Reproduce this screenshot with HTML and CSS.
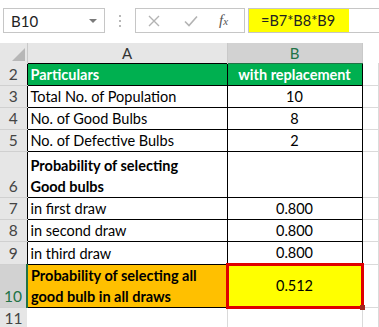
FILE: index.html
```html
<!DOCTYPE html>
<html lang="en">
<head>
    <meta charset="UTF-8">
    <meta name="viewport" content="width=device-width, initial-scale=1.0">
    <title>Probability Sheet</title>
    <link rel="stylesheet" href="styles.css">
</head>
<body>

<div class="formula-bar">
    <div class="name-box">
        <span>B10</span>
        <span class="drop"></span>
    </div>
    <div class="grip"><i></i><i></i><i></i></div>
    <div class="buttons">
        <svg class="btn-x" width="12" height="12" viewBox="0 0 12 12"><path d="M1 1L11 11M11 1L1 11" stroke="#b3b3b3" stroke-width="1.4" fill="none"/></svg>
        <svg class="btn-ok" width="14" height="12" viewBox="0 0 14 12"><path d="M1 6.5L5 10.5L13 1.5" stroke="#b3b3b3" stroke-width="1.6" fill="none"/></svg>
        <span class="fx">f<small>x</small></span>
    </div>
    <div class="formula">
        <span class="formula-text">=B7*B8*B9</span>
    </div>
</div>

<table class="sheet">
    <colgroup>
        <col class="c-head">
        <col class="c-a">
        <col class="c-b">
        <col>
    </colgroup>
    <tr class="col-heads">
        <th class="corner"><span class="tri"></span></th>
        <th>A</th>
        <th class="sel">B</th>
        <th class="plain"></th>
    </tr>
    <tr>
        <th class="rh">2</th>
        <td class="cell green">Particulars</td>
        <td class="cell green center">with replacement</td>
        <td class="blank"></td>
    </tr>
    <tr>
        <th class="rh">3</th>
        <td class="cell">Total No. of Population</td>
        <td class="cell center">10</td>
        <td class="blank"></td>
    </tr>
    <tr>
        <th class="rh">4</th>
        <td class="cell">No. of Good Bulbs</td>
        <td class="cell center">8</td>
        <td class="blank"></td>
    </tr>
    <tr>
        <th class="rh">5</th>
        <td class="cell">No. of Defective Bulbs</td>
        <td class="cell center">2</td>
        <td class="blank"></td>
    </tr>
    <tr class="tall">
        <th class="rh">6</th>
        <td class="cell bold">Probability of selecting<br>Good bulbs</td>
        <td class="cell"></td>
        <td class="blank"></td>
    </tr>
    <tr>
        <th class="rh">7</th>
        <td class="cell">in first draw</td>
        <td class="cell center">0.800</td>
        <td class="blank"></td>
    </tr>
    <tr>
        <th class="rh">8</th>
        <td class="cell">in second draw</td>
        <td class="cell center">0.800</td>
        <td class="blank"></td>
    </tr>
    <tr>
        <th class="rh">9</th>
        <td class="cell">in third draw</td>
        <td class="cell center">0.800</td>
        <td class="blank"></td>
    </tr>
    <tr class="tall short">
        <th class="rh active">10</th>
        <td class="cell bold orange">Probability of selecting all<br>good bulb in all draws</td>
        <td class="cell center yellow picked">0.512<span class="handle"></span></td>
        <td class="blank"></td>
    </tr>
    <tr>
        <th class="rh">11</th>
        <td class="blank"></td>
        <td class="blank"></td>
        <td class="blank"></td>
    </tr>
</table>

</body>
</html>
```

FILE: styles.css
```css
body {
    margin: 0;
    background: #fff;
    font-family: Lato, "Open Sans", sans-serif;
    color: #000;
    width: 379px;
    height: 327px;
    overflow: hidden;
}

/* formula bar */
.formula-bar {
    display: flex;
    align-items: center;
    height: 43px;
    padding-left: 3px;
    box-sizing: border-box;
}
.name-box {
    width: 102px;
    height: 25px;
    border: 1px solid #c6c6c6;
    box-sizing: border-box;
    display: flex;
    align-items: center;
    justify-content: space-between;
    padding: 0 7px 0 7px;
    font-size: 15px;
    color: #222;
    margin-bottom: 2px;
}
.drop {
    width: 0;
    height: 0;
    border-left: 4px solid transparent;
    border-right: 4px solid transparent;
    border-top: 4px solid #7a7a7a;
}
.grip {
    width: 30px;
    display: flex;
    flex-direction: column;
    align-items: center;
    gap: 3px;
    margin-bottom: 2px;
}
.grip i {
    width: 2px;
    height: 2px;
    background: #b8b8b8;
}
.buttons {
    width: 110px;
    height: 25px;
    border: 1px solid #c6c6c6;
    box-sizing: border-box;
    display: flex;
    align-items: center;
    padding-left: 12px;
    margin-bottom: 2px;
}
.btn-ok {
    margin-left: 24px;
}
.fx {
    margin-left: 21px;
    font-family: "Liberation Serif", serif;
    font-style: italic;
    font-size: 15px;
    color: #555;
}
.fx small {
    font-size: 11px;
}
.formula {
    flex: 1;
    height: 25px;
    margin-left: 3px;
    border: 1px solid #c6c6c6;
    border-right: none;
    box-sizing: border-box;
    margin-bottom: 2px;
}
.formula-text {
    display: block;
    width: 100px;
    height: 23px;
    background: #ffff00;
    font-size: 14.5px;
    line-height: 23px;
    padding-left: 12px;
    box-sizing: border-box;
    color: #222;
}

/* grid */
.sheet {
    border-collapse: collapse;
    table-layout: fixed;
    width: 379px;
    font-size: 14.5px;
}
.c-head { width: 27px; }
.c-a { width: 200px; }
.c-b { width: 135px; }

tr {
    height: 22px;
}
tr.col-heads {
    height: 20px;
}
tr.tall {
    height: 46px;
}
tr.tall.short {
    height: 40px;
}

.col-heads th {
    padding: 0;
    background: #e6e6e6;
    border-right: 1px solid #c9c9c9;
    font-weight: normal;
    color: #333;
    font-size: 15px;
    line-height: 18px;
}
.col-heads th.sel {
    background: #d2d2d2;
    color: #217346;
    border-bottom: 1px solid #217346;
}
.col-heads th.plain {
    background: #fff;
    border: none;
}
.corner {
    position: relative;
}
.tri {
    position: absolute;
    right: 2px;
    bottom: 2px;
    width: 0;
    height: 0;
    border-left: 13px solid transparent;
    border-bottom: 13px solid #b7b7b7;
}

.rh {
    background: #e6e6e6;
    font-weight: normal;
    color: #444;
    font-size: 15.5px;
    padding: 0;
    text-align: center;
    border-bottom: 1px solid #d0d0d0;
    vertical-align: bottom;
    line-height: 21px;
}
.rh.active {
    background: #d2d2d2;
    color: #217346;
    border-right: 2px solid #217346;
}

.cell {
    border: 1px solid #000;
    padding: 0 3px;
    vertical-align: bottom;
    white-space: nowrap;
    line-height: 21px;
}
.cell.bold {
    font-weight: bold;
}
.center {
    text-align: center;
}
.green {
    background: #00b050;
    color: #fff;
    font-weight: bold;
}
.orange {
    background: #ffc000;
}
.yellow {
    background: #ffff00;
}
.picked {
    border: 3px solid #e00000;
    position: relative;
    vertical-align: middle;
}
.handle {
    position: absolute;
    right: -4px;
    bottom: -4px;
    width: 5px;
    height: 5px;
    background: #a0281e;
}
.blank {
    border-right: 1px solid #dadada;
    border-bottom: 1px solid #dadada;
}
```
